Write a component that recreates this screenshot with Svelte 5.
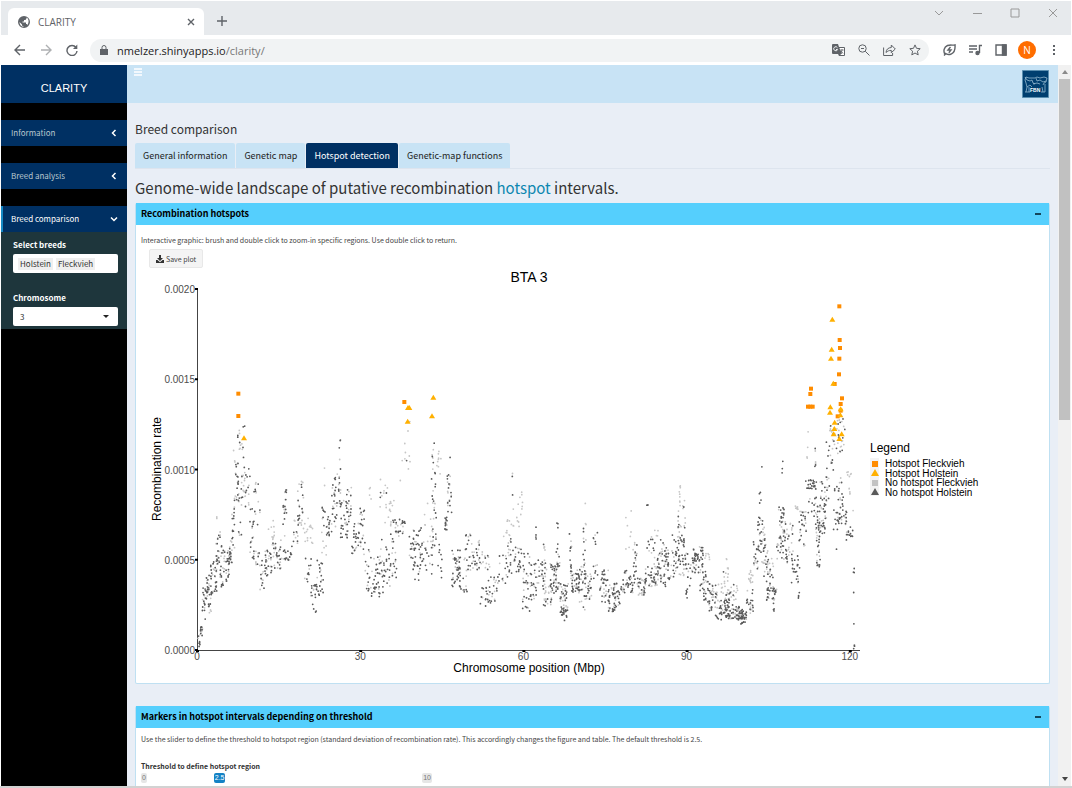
<script>
  const MENU = ['Information', 'Breed analysis'];
  const TABS = ['General information', 'Genetic map', 'Hotspot detection', 'Genetic-map functions'];

  let activeTab = $state('Hotspot detection');
  let chromosome = $state('3');
  let threshold = $state(2.5);

  // Plot area in px; marker data below is kept in thirds of a px, origin bottom left.
  const W = 663;
  const H = 361;
  const UNIT = 3;

  const X_TICKS = [0, 30, 60, 90, 120].map((v) => ({ label: v, x: v * 5.44 }));
  const Y_TICKS = ['0.0000', '0.0005', '0.0010', '0.0015', '0.0020'].map((label, i) => ({
    label,
    y: H - (i * H) / 4
  }));

  // [x from, x to, rate from, rate to, Holstein markers, Fleckvieh markers]
  const BANDS = [
    [3, 9, 10, 50, 6, 1], [9, 17, 40, 80, 9, 3], [16, 26, 80, 200, 14, 4], [26, 38, 150, 230, 15, 5],
    [34, 44, 110, 190, 6, 6], [41, 59, 170, 270, 24, 8], [57, 74, 230, 360, 14, 14], [58, 62, 380, 405, 0, 2],
    [69, 81, 190, 300, 12, 6], [81, 99, 200, 300, 16, 8], [95, 107, 260, 340, 14, 8], [105, 115, 300, 470, 12, 5],
    [109, 115, 560, 600, 0, 3], [115, 127, 430, 560, 12, 4], [121, 134, 340, 520, 8, 4], [122, 131, 600, 670, 3, 5],
    [134, 144, 450, 690, 7, 10], [143, 159, 430, 560, 8, 8], [159, 171, 270, 450, 14, 6], [171, 189, 350, 540, 7, 6],
    [171, 189, 250, 300, 3, 8], [189, 204, 180, 270, 8, 5], [204, 224, 220, 300, 18, 10], [214, 234, 330, 390, 0, 9],
    [224, 254, 240, 340, 16, 18], [258, 271, 330, 490, 12, 7], [259, 284, 270, 300, 13, 5], [284, 304, 310, 400, 6, 8],
    [299, 321, 370, 515, 12, 14], [319, 344, 200, 280, 9, 2], [319, 349, 320, 400, 0, 16], [339, 359, 110, 200, 14, 3],
    [357, 381, 160, 270, 20, 5], [374, 389, 280, 430, 8, 8], [381, 386, 480, 550, 0, 2], [389, 404, 340, 400, 12, 5],
    [404, 421, 370, 530, 18, 8], [425, 431, 430, 640, 9, 6], [429, 451, 330, 450, 22, 6], [449, 464, 340, 510, 12, 8],
    [464, 491, 290, 380, 20, 8], [489, 504, 270, 440, 12, 6], [504, 524, 150, 310, 12, 6], [515, 524, 450, 500, 0, 4],
    [524, 549, 160, 280, 22, 8], [549, 579, 170, 340, 22, 8], [549, 574, 370, 540, 3, 10], [577, 599, 210, 390, 16, 10],
    [567, 599, 390, 450, 0, 9], [594, 624, 340, 400, 16, 6], [609, 640, 500, 690, 1, 10], [637, 654, 240, 340, 14, 6],
    [649, 679, 200, 370, 30, 8], [679, 709, 225, 310, 10, 3], [679, 719, 320, 440, 0, 16], [703, 718, 300, 590, 20, 10],
    [707, 712, 600, 640, 1, 1], [719, 735, 210, 320, 9, 0], [719, 732, 500, 620, 0, 9], [739, 751, 360, 400, 12, 3],
    [749, 764, 400, 530, 12, 10], [757, 760, 560, 580, 1, 0], [764, 789, 190, 300, 30, 8], [784, 814, 160, 280, 14, 10],
    [804, 829, 240, 350, 12, 8], [827, 849, 240, 330, 14, 10], [849, 879, 240, 300, 3, 12], [849, 874, 120, 200, 13, 1],
    [874, 904, 140, 220, 14, 8], [899, 929, 200, 290, 9, 6], [919, 949, 310, 400, 0, 12], [929, 949, 200, 340, 12, 5],
    [944, 947, 450, 535, 2, 1], [949, 974, 230, 310, 16, 6], [949, 979, 360, 480, 0, 14], [977, 999, 115, 300, 20, 10],
    [999, 1024, 150, 260, 18, 10], [1013, 1018, 330, 370, 4, 0], [1024, 1049, 190, 270, 14, 12], [1039, 1044, 300, 320, 1, 4],
    [1039, 1064, 130, 200, 8, 18], [1059, 1079, 170, 260, 24, 10], [1077, 1089, 180, 300, 12, 12], [1079, 1083, 300, 385, 5, 0],
    [1089, 1114, 110, 200, 22, 20], [1094, 1110, 85, 125, 13, 2], [1117, 1124, 190, 350, 10, 8], [1124, 1149, 170, 230, 28, 12],
    [1139, 1164, 120, 260, 12, 10], [1158, 1167, 190, 380, 9, 8], [1162, 1165, 425, 440, 0, 1], [1164, 1184, 150, 230, 14, 14],
    [1189, 1202, 210, 365, 9, 4], [1204, 1239, 140, 240, 24, 14], [1234, 1254, 105, 190, 22, 10], [1250, 1270, 120, 200, 16, 8],
    [1269, 1309, 170, 240, 26, 14], [1309, 1324, 180, 330, 14, 6], [1284, 1312, 300, 420, 0, 8], [1319, 1349, 160, 220, 14, 18],
    [1344, 1384, 190, 260, 20, 14], [1344, 1374, 290, 340, 8, 3], [1349, 1353, 434, 438, 2, 0], [1369, 1409, 190, 300, 26, 20],
    [1399, 1434, 200, 300, 22, 10], [1369, 1439, 300, 360, 5, 6], [1434, 1464, 220, 350, 32, 16], [1441, 1467, 350, 450, 5, 15],
    [1445, 1450, 440, 500, 0, 7], [1464, 1494, 190, 290, 14, 8], [1466, 1472, 145, 185, 6, 0], [1484, 1519, 230, 310, 36, 12],
    [1509, 1539, 135, 240, 24, 8], [1524, 1539, 270, 290, 0, 7], [1534, 1559, 100, 180, 16, 8], [1544, 1624, 150, 200, 8, 36],
    [1579, 1594, 200, 280, 1, 12], [1559, 1609, 90, 150, 52, 16], [1609, 1639, 90, 130, 22, 16], [1624, 1649, 75, 118, 26, 18],
    [1649, 1669, 110, 200, 14, 6], [1654, 1669, 200, 240, 0, 13], [1669, 1684, 240, 330, 10, 6], [1679, 1704, 290, 400, 22, 12],
    [1686, 1692, 440, 480, 4, 0], [1692, 1695, 540, 550, 1, 0], [1699, 1714, 200, 340, 10, 8], [1694, 1709, 258, 272, 0, 8],
    [1709, 1739, 150, 190, 24, 10], [1709, 1729, 190, 280, 5, 12], [1728, 1732, 105, 140, 4, 0], [1739, 1764, 260, 430, 30, 18],
    [1755, 1758, 510, 580, 3, 0], [1764, 1789, 260, 400, 14, 16], [1779, 1809, 200, 290, 18, 3], [1803, 1807, 150, 180, 4, 0],
    [1794, 1804, 415, 435, 0, 7], [1804, 1829, 310, 430, 16, 12], [1821, 1859, 475, 510, 24, 2], [1829, 1859, 395, 460, 9, 2],
    [1830, 1834, 560, 665, 0, 4], [1853, 1857, 545, 605, 3, 3], [1854, 1889, 350, 440, 36, 16], [1859, 1871, 250, 350, 13, 8],
    [1869, 1899, 440, 520, 12, 10], [1884, 1920, 540, 625, 10, 4], [1898, 1914, 625, 675, 3, 12], [1909, 1924, 350, 420, 9, 1],
    [1917, 1921, 300, 306, 1, 0], [1924, 1944, 380, 450, 15, 2], [1909, 1940, 450, 520, 9, 5], [1919, 1944, 590, 700, 9, 14],
    [1944, 1964, 520, 535, 0, 6], [1955, 1961, 465, 485, 0, 5], [1941, 1969, 330, 420, 18, 5], [1969, 1972, 230, 245, 4, 0],
    [1970, 1973, 168, 174, 1, 0], [1970, 1973, 78, 82, 1, 0], [1970, 1973, 2, 22, 3, 2]
  ];

  const HOT_FLECKVIEH = [
    [124, 769], [124, 702], [622, 744], [1842, 784], [1840, 768], [1833, 730], [1840, 730], [1847, 730],
    [1927, 1031], [1928, 930], [1929, 906], [1927, 874], [1926, 827], [1913, 798], [1935, 755], [1931, 738],
    [1931, 718], [1922, 701]
  ];
  const HOT_HOLSTEIN = [
    [141, 635], [633, 726], [637, 726], [632, 685], [709, 757], [705, 701], [1906, 991], [1904, 901],
    [1902, 874], [1909, 799], [1900, 728], [1899, 712], [1931, 722], [1930, 704], [1913, 682], [1912, 663],
    [1910, 647], [1934, 647], [1927, 633]
  ];

  const LEGEND = ['Hotspot Fleckvieh', 'Hotspot Holstein', 'No hotspot Fleckvieh', 'No hotspot Holstein'];

  // small seeded generator so the scatter is stable between renders
  let seed = 20;
  function rand() {
    seed = (seed * 16807) % 2147483647;
    return seed / 2147483647;
  }

  function scatter(column) {
    let d = '';
    for (const b of BANDS) {
      for (let i = 0; i < b[column]; i++) {
        const x = (b[0] + rand() * (b[1] - b[0])) / UNIT;
        const y = H - (b[2] + rand() * (b[3] - b[2])) / UNIT;
        d += `M${x.toFixed(1)} ${y.toFixed(1)}h0`;
      }
    }
    return d;
  }

  const coldFleckvieh = scatter(5);
  const coldHolstein = scatter(4);
</script>

{#snippet chevron(d)}
  <svg class="chevron" viewBox="0 0 8 8" width="8" height="8"><path {d} /></svg>
{/snippet}

<div class="browser">
  <div class="titlebar">
    <div class="browser-tab">
      <svg width="12" height="12" viewBox="0 0 24 24">
        <path fill="#5f6368" d="M12 0a12 12 0 1 0 0 24 12 12 0 0 0 0-24zM3 12l5 5v2l3 2v1C6 21 3 17 3 12zm16 6c-.5-1-1-2-3-2v-3H9v-2h3V8h3l2-3V3c4 2 6 8 2 15z" />
      </svg>
      <span class="tab-title">CLARITY</span>
      <button class="plain" aria-label="Close tab">
        <svg width="8" height="8" viewBox="0 0 8 8" class="line"><path d="M1 1l6 6M7 1L1 7" /></svg>
      </button>
    </div>
    <button class="plain new-tab" aria-label="New tab">
      <svg width="10" height="10" viewBox="0 0 10 10" class="line"><path d="M5 0v10M0 5h10" /></svg>
    </button>
    <div class="window-buttons">
      <button class="plain" aria-label="Search tabs"><svg width="10" height="10" viewBox="0 0 10 10"><path d="M1 3l4 4 4-4" /></svg></button>
      <button class="plain" aria-label="Minimize"><svg width="10" height="10" viewBox="0 0 10 10"><path d="M1 5.5h9" /></svg></button>
      <button class="plain" aria-label="Maximize"><svg width="10" height="10" viewBox="0 0 10 10"><path d="M1 1h8v8h-8z" /></svg></button>
      <button class="plain" aria-label="Close"><svg width="10" height="10" viewBox="0 0 10 10"><path d="M1 1l8 8M9 1l-8 8" /></svg></button>
    </div>
  </div>

  <div class="toolbar">
    <button class="plain" aria-label="Back"><svg width="12" height="12" viewBox="0 0 12 12" class="line"><path d="M11 6H1M6 1L1 6l5 5" /></svg></button>
    <button class="plain dim" aria-label="Forward"><svg width="12" height="12" viewBox="0 0 12 12" class="line"><path d="M1 6h10M6 1l5 5-5 5" /></svg></button>
    <button class="plain" aria-label="Reload">
      <svg width="12" height="12" viewBox="0 0 12 12" class="line"><path d="M10 3.5A5 5 0 1 0 11 7" /><path d="M11.3 .5v4.500H7z" fill="#5f6368" stroke="none" /></svg>
    </button>
    <div class="address">
      <svg width="8" height="10" viewBox="0 0 8 10">
        <path fill="#5f6368" d="M0 4h8v6H0z" /><path fill="none" stroke="#5f6368" d="M2 4V2.5a2 2 0 0 1 4 0V4" />
      </svg>
      <span class="url">nmelzer.shinyapps.io<span>/clarity/</span></span>
      <svg width="13" height="12" viewBox="0 0 13 12">
        <path fill="#5f6368" d="M1 0h5l1 3H12a1 1 0 0 1 1 1v7a1 1 0 0 1-1 1H7l-1-2H1a1 1 0 0 1-1-1V1a1 1 0 0 1 1-1z" />
        <path fill="#fff" d="M7.4 4H12v7H8l2-1.5z" />
        <path fill="none" stroke="#f1f3f4" d="M5.5 3.8A2 2 0 1 0 5.6 5.5H4" />
        <path fill="none" stroke="#5f6368" stroke-width=".8" d="M8.3 6h3.4M10 5v1c0 1.5-.8 2.5-1.4 3M9 7c.5 1 1.5 2 2.3 2.3" />
      </svg>
      <svg width="12" height="12" viewBox="0 0 12 12" class="line thin"><circle cx="4.5" cy="4.5" r="3.7" /><path d="M7.3 7.3L11.5 11.5M3 4.5h3" /></svg>
      <svg width="13" height="12" viewBox="0 0 13 12" class="line thin"><path d="M.6 3.5v8h9V9" /><path d="M3 8.5c.3-3 2-4.800 5.300-5V1l4 4-4 3.700V6.400C6 6.400 4.500 7 3 8.500z" /></svg>
      <svg width="12" height="12" viewBox="0 0 12 12" class="line thin"><path d="M6 .9l1.500 3.400 3.700.4-2.800 2.500.8 3.700L6 9 2.800 10.900l.8-3.700L.8 4.700l3.700-.4z" /></svg>
    </div>
    <div class="extensions">
      <svg width="13" height="12" viewBox="0 0 13 12" class="line"><path d="M2 10.5C0 7 1 3 4.500 1.500 7 .6 10 1.500 12 .8c.3 4 0 7.500-3.500 9C6 11 3.500 10.500 2 9M1 11.500l2-2" /><path d="M7.500 3L5 6h3L5.800 8.800" /></svg>
      <svg width="13" height="12" viewBox="0 0 13 12" class="line"><path d="M0 2h8M0 5h8M0 8h4M10.5 9V1.5H13" /><circle cx="8.5" cy="9" r="1.5" fill="#5f6368" /></svg>
      <svg width="12" height="12" viewBox="0 0 12 12" class="line"><path d="M1 1h10v10H1z" /><path fill="#5f6368" d="M7.5 1H11v10H7.500z" /></svg>
      <button class="avatar" aria-label="Profile">N</button>
      <svg width="4" height="12" viewBox="0 0 4 12"><path d="M1 1h2v2H1zM1 5h2v2H1zM1 9h2v2H1z" fill="#5f6368" /></svg>
    </div>
  </div>

  <div class="page">
    <aside>
      <div class="logo">CLARITY</div>
      <nav>
        {#each MENU as item}
          <button class="menu-item">{item}{@render chevron('M5.5 1L2.5 4l3 3')}</button>
        {/each}
        <button class="menu-item open">Breed comparison{@render chevron('M1 2.5l3 3 3-3')}</button>
      </nav>
      <div class="submenu">
        <label for="breeds">Select breeds</label>
        <div class="selectize">
          <span>Holstein</span>
          <span>Fleckvieh</span>
          <input id="breeds" type="text" />
        </div>
        <label for="chromosome">Chromosome</label>
        <div class="select-wrap">
          <select id="chromosome" bind:value={chromosome}>
            {#each Array.from({ length: 29 }, (_, i) => String(i + 1)) as n}
              <option value={n}>{n}</option>
            {/each}
          </select>
          <svg width="6" height="4" viewBox="0 0 6 4"><path d="M0 0h6L3 3z" fill="#222" /></svg>
        </div>
      </div>
    </aside>

    <div class="content">
      <header>
        <button class="plain burger" aria-label="Toggle navigation">
          <svg width="8" height="8" viewBox="0 0 8 8"><path d="M0 1h8M0 4h8M0 7h8" stroke="#fff" stroke-width="1.5" /></svg>
        </button>
        <svg class="fbn" width="27" height="28" viewBox="0 0 27 28">
          <path fill="#003f70" stroke="#5b8fb0" d="M.5.5h26v27H.5z" />
          <path fill="none" stroke="#a8c8dc" stroke-width=".7" d="M4 22l1-5-1-4-1-3 1-3 3 1h6l2-1 3 1 4-1 3 1-1 4-2 1-1 2M3 7l2 3 3 1 2-1 1 3 2 1M14 8l1 3 3-1 3 2 3-1M11 14l4-1 3 1M5 17l3-2 2 2M23 14v8M3 22h5M19 22h4M20 17l1 5M7 17v5" />
          <text x="8" y="22">FBN</text>
        </svg>
      </header>

      <main>
        <h1>Breed comparison</h1>
        <div class="tabs" role="tablist">
          {#each TABS as t}
            <button role="tab" aria-selected={t === activeTab} class:on={t === activeTab} onclick={() => (activeTab = t)}>{t}</button>
          {/each}
        </div>
        <h2>Genome-wide landscape of putative recombination <a href="#hotspot">hotspot</a> intervals.</h2>

        <section class="box">
          <div class="box-header">
            <h3>Recombination hotspots</h3>
            <button class="plain collapse" aria-label="Collapse"></button>
          </div>
          <div class="box-body">
            <p>Interactive graphic: brush and double click to zoom-in specific regions. Use double click to return.</p>
            <button class="save">
              <svg width="8" height="8" viewBox="0 0 8 8"><path fill="#333" d="M3 0h2v3h2L4 6 1 3h2zM0 5h1.500L4 7.200 6.500 5H8v3H0z" /></svg>
              Save plot
            </button>
            <svg class="plot" viewBox="0 0 903 408">
              <text class="plot-title" x="388" y="14">BTA 3</text>
              <text class="axis-title" x="388" y="404">Chromosome position (Mbp)</text>
              <text class="axis-title" transform="translate(20 201) rotate(-90)">Recombination rate</text>
              <g transform="translate(56 21)">
                <path class="axis" d="M.5 0V{H}.5H{W}" />
                {#each Y_TICKS as t}
                  <path class="tick" d="M-2 {t.y}h3" />
                  <text class="tick-label end" x="-2" y={t.y + 4}>{t.label}</text>
                {/each}
                {#each X_TICKS as t}
                  <path class="tick" d="M{t.x - 1} {H + 1}h3" />
                  <text class="tick-label" x={t.x} y={H + 10}>{t.label}</text>
                {/each}
                <path class="dots light" d={coldFleckvieh} />
                <path class="dots dark" d={coldHolstein} />
                {#each HOT_FLECKVIEH as [x, y]}
                  <rect x={x / UNIT - 2} y={H - y / UNIT - 2} width="4" height="4" fill="#ff8c00" />
                {/each}
                {#each HOT_HOLSTEIN as [x, y]}
                  <path transform="translate({x / UNIT} {H - y / UNIT})" d="M0-3L3 2H-3z" fill="#ffb000" />
                {/each}
              </g>
              <g transform="translate(729 180)">
                <text class="legend-title" x="0" y="4">Legend</text>
                <path d="M0 10h9v38H0z" fill="#f4f4f4" />
                <path d="M2 13h6v6H2z" fill="#ff8c00" />
                <path d="M5 21l4 7H1z" fill="#ffb000" />
                <path d="M2 32h6v6H2z" fill="#c3c3c3" />
                <path d="M5 40l4 7H1z" fill="#595959" />
                {#each LEGEND as name, i}
                  <text class="legend-text" x="15" y={19 + Math.round(i * 9.5)}>{name}</text>
                {/each}
              </g>
            </svg>
          </div>
        </section>

        <section class="box">
          <div class="box-header">
            <h3>Markers in hotspot intervals depending on threshold</h3>
            <button class="plain collapse" aria-label="Collapse"></button>
          </div>
          <div class="box-body compact">
            <p>Use the slider to define the threshold to hotspot region (standard deviation of recombination rate). This accordingly changes the figure and table. The default threshold is 2.5.</p>
            <div class="slider">
              <label for="threshold">Threshold to define hotspot region</label>
              <div class="marks">
                <span>0</span>
                <output for="threshold" style:left="{threshold * 10}%">{threshold}</output>
                <span>10</span>
              </div>
              <input id="threshold" type="range" min="0" max="10" step="0.5" bind:value={threshold} />
            </div>
          </div>
        </section>
      </main>
    </div>

    <div class="scrollbar">
      <svg width="6" height="4" viewBox="0 0 6 4"><path d="M0 4h6L3 0z" fill="#8a8a8a" /></svg>
      <div class="thumb"></div>
      <svg width="6" height="4" viewBox="0 0 6 4"><path d="M0 0h6L3 4z" fill="#444" /></svg>
    </div>
  </div>
</div>

<style>
  :global(body) {
    margin: 0;
    background: #fff;
  }
  .browser {
    box-sizing: border-box;
    height: 100vh;
    padding: 1px 1px 0;
    border-bottom: 2px solid #d2d2d2;
    display: flex;
    flex-direction: column;
    overflow: hidden;
    font-family: "Noto Sans CJK JP", "Noto Sans", sans-serif;
    color: #333;
  }
  button,
  input,
  select {
    font-family: inherit;
  }
  .plain {
    border: none;
    background: none;
    padding: 0;
    display: flex;
    align-items: center;
    justify-content: center;
  }
  .line {
    fill: none;
    stroke: #5f6368;
    stroke-width: 1.4;
  }
  .thin {
    stroke-width: 1;
  }

  .titlebar {
    height: 34px;
    flex: none;
    display: flex;
    align-items: center;
    background: #e7eaed;
    padding-left: 7px;
  }
  .browser-tab {
    box-sizing: border-box;
    width: 196px;
    height: 27px;
    align-self: flex-end;
    display: flex;
    align-items: center;
    gap: 8px;
    padding: 0 9px 0 10px;
    background: #fff;
    border-radius: 6px 6px 0 0;
    font: 10px "Open Sans", sans-serif;
    color: #5f6368;
  }
  .tab-title {
    flex: 1;
  }
  .new-tab {
    width: 36px;
    padding-top: 6px;
  }
  .window-buttons {
    margin-left: auto;
    align-self: flex-start;
    display: flex;
    gap: 28px;
    padding: 7px 13px 0 0;
  }
  .window-buttons svg {
    fill: none;
    stroke: #999;
  }

  .toolbar {
    height: 30px;
    flex: none;
    display: flex;
    align-items: center;
    gap: 14px;
    padding: 0 15px 0 13px;
    background: #fff;
  }
  .toolbar .dim {
    opacity: 0.5;
  }
  .address {
    flex: 1;
    box-sizing: border-box;
    height: 23px;
    display: flex;
    align-items: center;
    gap: 13px;
    padding: 0 8px 0 10px;
    margin-left: -2px;
    border-radius: 12px;
    background: #f1f3f4;
  }
  .url {
    flex: 1;
    margin-left: -4px;
    font: 11px "Open Sans", sans-serif;
    color: #222;
  }
  .url span {
    color: #777;
  }
  .extensions {
    display: flex;
    align-items: center;
    gap: 13px;
  }
  .avatar {
    width: 18px;
    height: 18px;
    padding: 0;
    margin: 0 3px 0 -2px;
    border: none;
    border-radius: 50%;
    background: #ff6d00;
    color: #fff;
    font: 10px "Open Sans", sans-serif;
  }

  .page {
    flex: 1;
    min-height: 0;
    display: flex;
    background: #e9eef6;
  }
  aside {
    width: 126px;
    flex: none;
    background: #000;
  }
  .logo {
    height: 38px;
    line-height: 46px;
    text-align: center;
    background: #003063;
    color: #fff;
    font-family: "Liberation Sans", Arial, sans-serif;
    font-size: 11px;
  }
  nav {
    display: flex;
    flex-direction: column;
    gap: 17px;
    padding-top: 17px;
  }
  .menu-item {
    height: 26px;
    display: flex;
    align-items: center;
    justify-content: space-between;
    padding: 0 9px 1px 10px;
    border: none;
    background: #003063;
    color: #b8c7ce;
    font-size: 8px;
  }
  .menu-item.open {
    color: #fff;
    padding-left: 8px;
    border-left: 2px solid #1589c4;
  }
  .chevron {
    fill: none;
    stroke: #fff;
    stroke-width: 1.5;
  }
  .submenu {
    height: 92px;
    padding: 5px 9px 0 12px;
    background: #1e363c;
  }
  .submenu label {
    display: block;
    line-height: 16px;
    font-size: 8px;
    font-weight: 700;
    color: #fff;
  }
  .selectize,
  .select-wrap {
    box-sizing: border-box;
    height: 19px;
    display: flex;
    align-items: center;
    background: #fff;
    border-radius: 2px;
    font-size: 8px;
  }
  .selectize {
    gap: 3px;
    padding: 0 5px;
    margin: 1px 0 17px;
  }
  .selectize span {
    background: #efefef;
    line-height: 12px;
    padding: 0 2px;
  }
  .selectize input {
    flex: 1;
    min-width: 0;
    border: none;
    outline: none;
    padding: 0;
  }
  .select-wrap {
    padding-right: 9px;
    margin-top: 1px;
  }
  .select-wrap select {
    flex: 1;
    appearance: none;
    border: none;
    background: none;
    padding: 0 7px;
    font-size: 8px;
    line-height: 16px;
    color: #333;
  }

  .content {
    flex: 1;
    min-width: 0;
    overflow: hidden;
  }
  header {
    height: 38px;
    display: flex;
    align-items: flex-start;
    justify-content: space-between;
    background: #c8e3f5;
    padding: 0 9px 0 7px;
    box-sizing: border-box;
  }
  .burger {
    margin-top: 3px;
  }
  .fbn {
    margin-top: 5px;
  }
  .fbn text {
    font: bold 5px "Liberation Sans", sans-serif;
    fill: #fff;
  }
  main {
    padding: 17px 8px 0;
  }
  h1,
  h2,
  h3,
  p {
    margin: 0;
    font-weight: 400;
  }
  h1 {
    font-size: 12px;
    line-height: 18px;
  }
  .tabs {
    display: flex;
    gap: 1px;
    margin-top: 5px;
    border-bottom: 1px solid #dde4ee;
  }
  .tabs button {
    height: 25px;
    padding: 0 8px;
    border: none;
    border-radius: 2px 2px 0 0;
    background: #c8e3f5;
    color: #222;
    font-size: 9px;
  }
  .tabs .on {
    background: #003063;
    color: #fff;
  }
  h2 {
    margin: 8px 0 4px;
    font-size: 15px;
    line-height: 22px;
  }
  h2 a {
    color: #0d87b0;
    text-decoration: none;
  }
  .box {
    margin-bottom: 22px;
    border: 1px solid #bfe0f2;
    border-top: none;
    border-radius: 2px;
    background: #fff;
  }
  .box-header {
    height: 22px;
    display: flex;
    align-items: center;
    justify-content: space-between;
    padding: 0 8px 0 5px;
    background: #55cffd;
  }
  h3 {
    font-size: 9px;
    font-weight: 700;
    line-height: 16px;
    color: #000;
  }
  .collapse::before {
    content: "";
    width: 6px;
    height: 2px;
    background: #14465c;
  }
  .box-body {
    padding: 8px 5px 7px;
  }
  .box-body.compact {
    padding-top: 4px;
  }
  p {
    font-size: 7px;
    line-height: 14px;
    color: #444;
  }
  .save {
    height: 19px;
    display: flex;
    align-items: center;
    gap: 2px;
    margin: 2px 0 0 8px;
    padding: 0 6px;
    border: 1px solid #e8e8e8;
    border-radius: 2px;
    background: #f4f4f4;
    color: #444;
    font-size: 7px;
  }
  .plot {
    display: block;
    width: 100%;
    font-family: "Liberation Sans", Arial, sans-serif;
  }
  .plot-title {
    font-size: 14px;
    text-anchor: middle;
  }
  .axis-title {
    font-size: 12px;
    text-anchor: middle;
  }
  .legend-title {
    font-size: 12px;
  }
  .legend-text {
    font-size: 10px;
  }
  .tick-label {
    font-size: 10px;
    fill: #4d4d4d;
    text-anchor: middle;
  }
  .tick-label.end {
    text-anchor: end;
  }
  .axis {
    fill: none;
    stroke: #444;
  }
  .tick {
    stroke: #000;
    stroke-width: 2;
  }
  .dots {
    fill: none;
    stroke-linecap: round;
    stroke-width: 1.8;
  }
  .dots.light {
    stroke: #c6c6c6;
  }
  .dots.dark {
    stroke: #5a5a5a;
  }
  .slider {
    width: 291px;
    padding-top: 13px;
  }
  .slider label {
    display: block;
    font-size: 7px;
    font-weight: 700;
    line-height: 14px;
  }
  .marks {
    position: relative;
    display: flex;
    justify-content: space-between;
    font: 7px "Liberation Sans", sans-serif;
    line-height: 10px;
    color: #777;
  }
  .marks span {
    background: #e6e6e6;
    padding: 0 1px;
    border-radius: 2px;
  }
  .marks output {
    position: absolute;
    background: #1482c5;
    color: #fff;
    padding: 0 1px;
    border-radius: 2px;
  }
  .slider input {
    width: 100%;
    margin: 0;
  }

  .scrollbar {
    width: 13px;
    flex: none;
    display: flex;
    flex-direction: column;
    align-items: center;
    padding: 5px 0;
    box-sizing: border-box;
    background: #f1f1f1;
  }
  .thumb {
    width: 11px;
    height: 48%;
    margin: 5px 0 auto;
    background: #c1c1c1;
  }
</style>
